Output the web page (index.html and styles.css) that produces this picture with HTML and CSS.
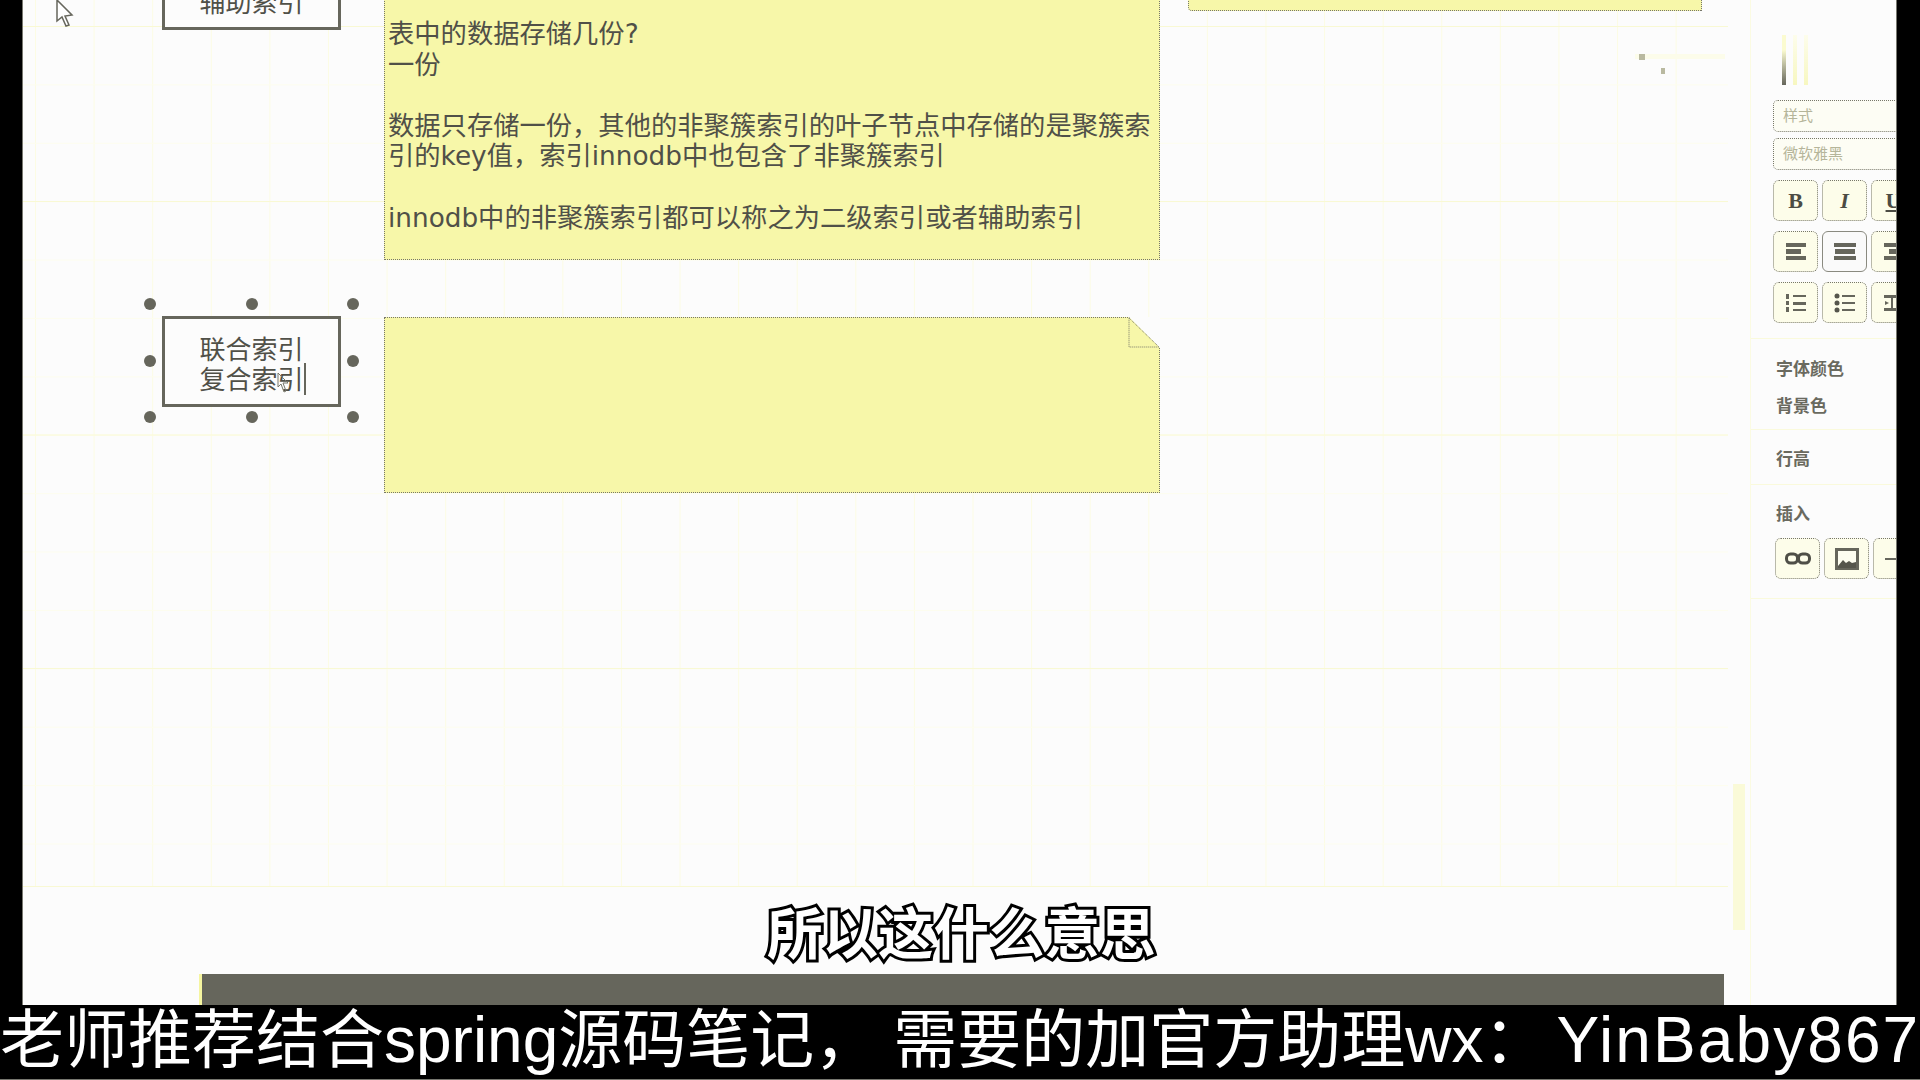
FILE: index.html
```html
<!DOCTYPE html>
<html lang="zh-CN">
<head>
    <meta charset="UTF-8">
    <title>索引笔记</title>
    <link rel="stylesheet" href="styles.css">
</head>
<body>
    <div class="screen">
        <div class="side-bar left"></div>
        <main class="board">
            <div class="grid"></div>
            <div class="grid-end"></div>
            <div class="ghost"><i class="ghost-dot one"></i><i class="ghost-dot two"></i></div>
            <div class="scroll-ghost"></div>

            <!-- shapes on the canvas -->
            <div class="box top-box">辅助索引</div>
            <div class="note note-main">表中的数据存储几份?<br>一份<br><br>数据只存储一份，其他的非聚簇索引的叶子节点中存储的是聚簇索引的key值，索引innodb中也包含了非聚簇索引<br><br>innodb中的非聚簇索引都可以称之为二级索引或者辅助索引</div>
            <div class="note note-side"></div>
            <div class="box selected-box">联合索引<br>复合索引
                <i class="caret"></i>
                <i class="handle nw"></i><i class="handle n"></i><i class="handle ne"></i>
                <i class="handle w"></i><i class="handle e"></i>
                <i class="handle sw"></i><i class="handle s"></i><i class="handle se"></i>
            </div>
            <div class="note note-empty">
                <svg class="fold" width="32" height="32" viewBox="0 0 32 32">
                    <path d="M1 0H32V31Z" fill="#fcfcfc"/>
                    <path d="M1 1L31 30H1Z" fill="#f7f7a9" stroke="#77776a" stroke-dasharray="1 1"/>
                </svg>
            </div>

            <svg class="cursor" width="20" height="28" viewBox="0 0 20 28">
                <path d="M2 0V21L7 17L11 26L14 25L10 16L17 15Z" fill="#fff" stroke="#66665c" stroke-width="1.5"/>
            </svg>
            <svg class="cursor small" width="12" height="22" viewBox="0 0 12 22">
                <path d="M1 1V15L4 12L7 20L9 19L6 11L11 11Z" fill="none" stroke="#77776a"/>
            </svg>

            <div class="subtitle">所以这什么意思</div>
            <div class="dark-bar"></div>
        </main>

        <aside class="panel">
            <section class="panel-top">
                <div class="streaks"><i class="streak strong"></i><i class="streak"></i><i class="streak"></i></div>
                <div class="select">样式</div>
                <div class="select">微软雅黑</div>
                <div class="btn-row first">
                    <button class="tool letter">B</button>
                    <button class="tool letter italic">I</button>
                    <button class="tool letter under">U</button>
                </div>
                <div class="btn-row">
                    <button class="tool">
                        <svg width="22" height="18" viewBox="0 0 22 18"><path d="M1 0H21V4H1ZM1 6H16V11H1ZM1 13H21V17H1Z" fill="#66665c"/></svg>
                    </button>
                    <button class="tool active">
                        <svg width="24" height="18" viewBox="0 0 24 18"><path d="M1 0H23V4H1ZM2 6H22V11H2ZM1 13H23V17H1Z" fill="#66665c"/></svg>
                    </button>
                    <button class="tool">
                        <svg width="22" height="18" viewBox="0 0 22 18"><path d="M1 0H21V4H1ZM6 6H21V11H6ZM1 13H21V17H1Z" fill="#66665c"/></svg>
                    </button>
                </div>
                <div class="btn-row">
                    <button class="tool">
                        <svg width="22" height="20" viewBox="0 0 22 20"><path d="M1 1H4V6H1ZM1 8H4V12H1ZM1 14H4V19H1ZM8 2H21V4H8ZM8 9H21V12H8ZM8 16H21V18H8Z" fill="#66665c"/></svg>
                    </button>
                    <button class="tool">
                        <svg width="22" height="20" viewBox="0 0 22 20"><circle cx="3" cy="3" r="2.5" fill="#55554c"/><circle cx="3" cy="10" r="2.5" fill="#55554c"/><circle cx="3" cy="17" r="2.5" fill="#55554c"/><path d="M8 2H21V4H8ZM8 9H21V11H8ZM8 16H21V18H8Z" fill="#66665c"/></svg>
                    </button>
                    <button class="tool">
                        <svg width="22" height="20" viewBox="0 0 22 20"><path d="M1 2H21V5H10V15H21V18H1V15H8V5H1ZM2 8L6 10L2 12Z" fill="#66665c"/></svg>
                    </button>
                </div>
            </section>

            <section class="panel-colors">
                <div class="panel-label">字体颜色</div>
                <div class="panel-label">背景色</div>
            </section>

            <section class="panel-line">
                <div class="panel-label">行高</div>
            </section>

            <section class="panel-insert">
                <div class="panel-label">插入</div>
                <div class="btn-row shifted">
                    <button class="tool">
                        <svg width="26" height="14" viewBox="0 0 26 14"><rect x="1.5" y="2" width="11" height="9" rx="4" fill="none" stroke="#4f4f47" stroke-width="3"/><rect x="13.5" y="2" width="11" height="9" rx="4" fill="none" stroke="#4f4f47" stroke-width="3"/></svg>
                    </button>
                    <button class="tool">
                        <svg width="24" height="22" viewBox="0 0 24 22"><rect x="1.5" y="1.5" width="21" height="19" fill="#fdfdf0" stroke="#66665c" stroke-width="3"/><path d="M3 18L8 12L11 15L14 13L17 15L21 14V20H3Z" fill="#55554c"/></svg>
                    </button>
                    <button class="tool">
                        <svg width="22" height="4" viewBox="0 0 22 4"><path d="M0 1H22V3H0Z" fill="#66665c"/></svg>
                    </button>
                </div>
            </section>
        </aside>
        <div class="side-bar right"></div>
    </div>
    <footer class="caption">老师推荐结合spring源码笔记，<span class="after-comma">需要的加官方助理wx：</span><span class="wx-id">YinBaby867</span></footer>
</body>
</html>
```

FILE: styles.css
```css
* {
    box-sizing: border-box;
}
html, body {
    margin: 0;
    height: 100%;
    overflow: hidden;
}
body {
    display: flex;
    flex-direction: column;
    width: 1920px;
    height: 1080px;
    background-color: #000;
    font-family: "DejaVu Sans", "Noto Sans CJK SC", sans-serif;
    color: #505048;
}
.screen {
    display: flex;
    height: 1005px;
    overflow: hidden;
}
.side-bar {
    background-color: #000;
}
.side-bar.left {
    width: 23px;
    border-right: 1px solid #77776f;
}
.side-bar.right {
    width: 24px;
    border-left: 1px solid #77776f;
}
.board {
    position: relative;
    width: 1727px;
    background-color: #fcfcfc;
    overflow: hidden;
}

/* grid: a faint cell grid with stronger lines every 4 rows */
.grid {
    position: absolute;
    top: 0;
    bottom: 119px;
    left: 0;
    right: 22px;
    background-image:
        linear-gradient(#f9f9d4, #f9f9d4),
        linear-gradient(#f9f9d4 1px, transparent 1px),
        linear-gradient(#fdfdee 1px, transparent 1px),
        linear-gradient(90deg, #fcfce4 1px, transparent 1px);
    background-size: 100% 1px, 100% 233.5px, 100% 58.4px, 58.6px 100%;
    background-position: 0 26px, 0 201px, 0 26px, 12px 0;
    background-repeat: no-repeat, repeat-y, repeat, repeat;
}
.grid-end {
    position: absolute;
    top: 886px;
    left: 0;
    width: 1705px;
    height: 1px;
    background-color: #f9f9d4;
}
.ghost {
    position: absolute;
    left: 1612px;
    top: 54px;
    width: 90px;
    height: 5px;
    background-color: #fcfcea;
}
.ghost-dot {
    position: absolute;
    width: 6px;
    height: 6px;
    background-color: #b9b9a0;
}
.ghost-dot.one {
    left: 4px;
    top: 0;
}
.ghost-dot.two {
    left: 26px;
    top: 14px;
    width: 4px;
}
.scroll-ghost {
    position: absolute;
    left: 1710px;
    top: 784px;
    width: 12px;
    height: 146px;
    background-color: #fafad8;
}

.box {
    position: absolute;
    left: 139px;
    width: 179px;
    border: 3px solid #66665c;
    background-color: #fcfcfc;
    font-size: 26px;
    line-height: 30px;
    text-align: center;
}
.top-box {
    top: -21px;
    height: 51px;
    padding-top: 6px;
}
.selected-box {
    top: 316px;
    height: 91px;
    padding-top: 16px;
}
.caret {
    position: absolute;
    left: 139px;
    top: 44px;
    width: 2px;
    height: 32px;
    background-color: #66665c;
}
.handle {
    position: absolute;
    width: 12px;
    height: 12px;
    border-radius: 50%;
    background-color: #66665c;
}
.handle.nw, .handle.n, .handle.ne {
    top: -21px;
}
.handle.w, .handle.e {
    top: 36px;
}
.handle.sw, .handle.s, .handle.se {
    top: 92px;
}
.handle.nw, .handle.w, .handle.sw {
    left: -21px;
}
.handle.n, .handle.s {
    left: 81px;
}
.handle.ne, .handle.e, .handle.se {
    left: 182px;
}

.note {
    position: absolute;
    left: 361px;
    width: 776px;
    background-color: #f7f7a9;
    border: 1px dotted #77776a;
}
.note-main {
    top: -2px;
    height: 262px;
    padding: 20px 3px 0;
    font-size: 26.3px;
    line-height: 30.6px;
}
.note-side {
    left: 1165px;
    top: -20px;
    width: 514px;
    height: 31px;
    border-bottom-left-radius: 4px;
}
.note-empty {
    top: 317px;
    height: 176px;
}
.fold {
    position: absolute;
    top: -1px;
    right: -1px;
}

.cursor {
    position: absolute;
    left: 32px;
    top: 0;
}
.cursor.small {
    left: 254px;
    top: 372px;
}

.subtitle {
    position: absolute;
    left: 744px;
    top: 896px;
    font-size: 55.5px;
    line-height: 78px;
    font-weight: 700;
    white-space: nowrap;
    color: #fff;
    -webkit-text-stroke: 6px #000;
    paint-order: stroke fill;
}
.dark-bar {
    position: absolute;
    left: 176px;
    top: 974px;
    width: 1525px;
    height: 31px;
    background-color: #66665c;
    border-left: 3px solid #f5f5a0;
}

/* right hand format panel, clipped by the black bar */
.panel {
    width: 146px;
    background-color: #fcfcfc;
    border-left: 1px solid #fbfbe2;
    overflow: hidden;
}
.panel section {
    padding-left: 22px;
    border-bottom: 1px solid #fafadc;
}
.panel-top {
    height: 339px;
    padding-top: 35px;
}
.streaks {
    display: flex;
    gap: 7px;
    height: 50px;
    margin: 0 0 15px 9px;
}
.streak {
    width: 4px;
    background: linear-gradient(#fdfdec, #f7f7c0);
}
.streak.strong {
    background: linear-gradient(#fbfbd0 30%, #66665c);
}
.select {
    width: 170px;
    height: 32px;
    margin-bottom: 6px;
    padding-left: 9px;
    border: 1px dotted #77776a;
    border-radius: 5px;
    background-color: #fdfdf4;
    font-size: 15px;
    line-height: 30px;
    color: #b5b59a;
}
.btn-row {
    display: flex;
    gap: 4px;
    margin-bottom: 10px;
}
.btn-row.first {
    margin-top: 10px;
}
.btn-row.shifted {
    margin-left: 2px;
}
.tool {
    flex: none;
    display: flex;
    align-items: center;
    justify-content: center;
    width: 45px;
    height: 41px;
    padding: 0;
    border: 1px dotted #77776a;
    border-radius: 6px;
    background-color: #fdfdea;
}
.tool.active {
    border: 1px solid #8a8a80;
    background-color: #fafafa;
}
.letter {
    font-family: "Liberation Serif", serif;
    font-size: 22px;
    font-weight: 700;
    color: #4c4c44;
}
.italic {
    font-style: italic;
}
.under {
    text-decoration: underline;
}
.panel-label {
    margin-left: 3px;
    font-size: 17px;
    line-height: 22px;
    font-weight: 700;
    color: #6a6a5f;
}
.panel-colors {
    height: 91px;
    padding-top: 19px;
    display: flex;
    flex-direction: column;
    gap: 15px;
}
.panel-line {
    height: 55px;
    padding-top: 18px;
}
.panel-insert {
    height: 114px;
    padding-top: 18px;
}
.panel-insert .panel-label {
    margin-bottom: 13px;
}

.caption {
    height: 75px;
    border-bottom: 1px solid #77776f;
    font-family: "Liberation Sans", "Noto Sans CJK SC", sans-serif;
    font-size: 64px;
    line-height: 70px;
    white-space: nowrap;
    color: #fff;
    overflow: hidden;
}
.after-comma {
    margin-left: 15px;
}
.wx-id {
    margin-left: 9px;
    letter-spacing: 2.1px;
}
```
